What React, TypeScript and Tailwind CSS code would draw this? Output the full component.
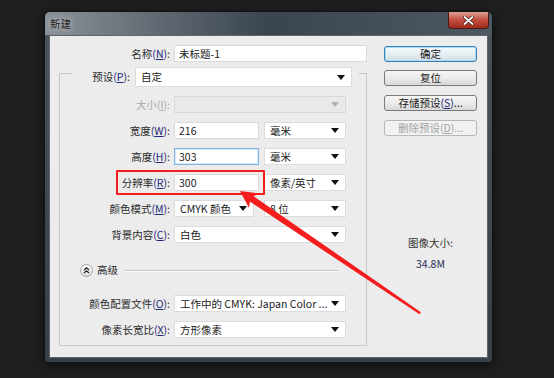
const FONT = "font-['Noto_Sans_CJK_SC',sans-serif]";

function Acc({ k, dim }: { k: string; dim?: boolean }) {
  return (
    <span className={dim ? "text-[#a9a9a9]" : "text-[#1f2a78]"}>
      (<span className="underline underline-offset-[1px]">{k}</span>)
    </span>
  );
}

function Label({ text, k, className, dim }: { text: string; k: string; className: string; dim?: boolean }) {
  return (
    <div className={`shrink-0 text-right whitespace-nowrap ${dim ? "text-[#a9a9a9]" : "text-[#2a2a2a]"} ${className}`}>
      {text}
      <Acc k={k} dim={dim} />:
    </div>
  );
}

function Arrow({ dim }: { dim?: boolean }) {
  return (
    <svg width="8" height="5" viewBox="0 0 8 5" className="shrink-0">
      <polygon points="0,0 8,0 4,5" fill={dim ? "#b0b0b0" : "#111"} />
    </svg>
  );
}

function Select({ value, className, dim, valueClass }: { value?: string; className: string; dim?: boolean; valueClass?: string }) {
  return (
    <div
      className={`flex items-center justify-between border pl-[5px] pr-[6px] ${
        dim ? "bg-[#e9e9e9] border-[#d9d9d9]" : "bg-white border-[#dcdcdc]"
      } ${className}`}
    >
      <span className={`whitespace-nowrap ${valueClass ?? "text-[#1a1a1a]"}`}>{value}</span>
      <Arrow dim={dim} />
    </div>
  );
}

function Field({ value, className, focused }: { value: string; className: string; focused?: boolean }) {
  return (
    <div
      className={`flex items-center bg-white border pl-[4px] text-[#1a1a1a] ${
        focused ? "border-[#7fb3e6] shadow-[inset_0_0_0_1px_#d6e8f9]" : "border-[#dadada]"
      } ${className}`}
    >
      {value}
    </div>
  );
}

function Row({ children, className = "" }: { children: React.ReactNode; className?: string }) {
  return <div className={`flex items-center h-[17px] ${className}`}>{children}</div>;
}

function Btn({ text, k, tail, kind }: { text: string; k?: string; tail?: string; kind?: "default" | "disabled" }) {
  const base = "h-[16px] w-[93px] rounded-[3px] border flex items-center justify-center leading-[14px]";
  const look =
    kind === "default"
      ? "border-[#3a7fb6] bg-gradient-to-b from-[#f4f9fc] via-[#e6eef3] to-[#d3dce2] shadow-[inset_0_0_0_1px_#a8dcf4] text-[#1a1a1a]"
      : kind === "disabled"
      ? "border-[#b4b8bb] bg-[#f2f2f2] text-[#a3a3a3]"
      : "border-[#7a7a7a] bg-gradient-to-b from-[#f6f6f6] via-[#ebebeb] to-[#d8d8d8] text-[#1a1a1a]";
  return (
    <div className={`${base} ${look}`}>
      {text}
      {k && (
        <span className={kind === "disabled" ? "" : "text-[#1f2a78]"}>
          (<span className="underline underline-offset-[1px]">{k}</span>)
        </span>
      )}
      {tail}
    </div>
  );
}

export default function App() {
  return (
    <div className={`relative w-[554px] h-[378px] overflow-hidden bg-[#1f1f1f] pl-[44px] pt-[11px] text-[10.5px] leading-[14px] ${FONT}`}>
      {/* window */}
      <div className="flex flex-col w-[449px] h-[352px] rounded-t-[6px] rounded-b-[4px] border border-[#121518] bg-gradient-to-b from-[#4a535c] to-[#383f46] shadow-[0_2px_8px_rgba(0,0,0,0.6)]">
        {/* title bar */}
        <div className="flex justify-between h-[23px] rounded-t-[5px] bg-gradient-to-r from-[#8b9197] via-[#3a4550] to-[#4d5863]">
          <div className="pl-[5px] pt-[5px] text-[#1c1c1c] [text-shadow:0_0_6px_rgba(255,255,255,0.8)]">新建</div>
          <div className="mr-[3px] w-[41px] h-[17px] rounded-b-[4px] border border-t-0 border-[#4a1a14] bg-gradient-to-b from-[#dca095] via-[#c24c3e] to-[#a12a1c] flex items-center justify-center">
            <svg width="11" height="9" viewBox="0 0 11 9">
              <path d="M1.5 1 L9.5 8 M9.5 1 L1.5 8" stroke="#3a1410" strokeWidth="3.2" strokeLinecap="round" />
              <path d="M1.5 1 L9.5 8 M9.5 1 L1.5 8" stroke="#ffffff" strokeWidth="1.8" strokeLinecap="round" />
            </svg>
          </div>
        </div>

        {/* client area */}
        <div className="mx-[4px] h-[323px] flex border border-[#5f666d] bg-[#ececec] text-[#2a2a2a]">
          {/* left column */}
          <div className="pl-[9px] pt-[9px] w-[317px] shrink-0">
            <Row>
              <Label text="名称" k="N" className="w-[111px]" />
              <Field value="未标题-1" className="ml-[4px] w-[195px] h-[17px]" />
            </Row>

            <div className="mt-[11px] w-[308px] border border-[#c8c8c8] pb-[7px]">
              <div className="mt-[-7px] ml-[12px] w-[287px] h-[20px] bg-[#ececec] flex items-center">
                <Label text="预设" k="P" className="w-[58px]" />
                <Select value="自定" className="ml-[5px] w-[217px] h-[20px]" />
              </div>

              <Row className="mt-[9px]">
                <Label text="大小" k="I" className="w-[110px]" dim />
                <Select className="ml-[4px] w-[172px] h-[17px]" dim />
              </Row>
              <Row className="mt-[9px]">
                <Label text="宽度" k="W" className="w-[110px]" />
                <Field value="216" className="ml-[4px] w-[85px] h-[17px]" />
                <Select value="毫米" className="ml-[5px] w-[82px] h-[17px]" />
              </Row>
              <Row className="mt-[9px]">
                <Label text="高度" k="H" className="w-[110px]" />
                <Field value="303" className="ml-[4px] w-[85px] h-[17px]" focused />
                <Select value="毫米" className="ml-[5px] w-[82px] h-[17px]" />
              </Row>
              <Row className="mt-[9px]">
                <Label text="分辨率" k="R" className="w-[110px]" />
                <Field value="300" className="ml-[4px] w-[85px] h-[17px]" />
                <Select value="像素/英寸" className="ml-[5px] w-[82px] h-[17px]" />
              </Row>
              <Row className="mt-[9px]">
                <Label text="颜色模式" k="M" className="w-[110px]" />
                <Select value="CMYK 颜色" className="ml-[4px] w-[80px] h-[17px]" />
                <Select value="8 位" className="ml-[10px] w-[82px] h-[17px]" />
              </Row>
              <Row className="mt-[9px]">
                <Label text="背景内容" k="C" className="w-[110px]" />
                <Select value="白色" className="ml-[4px] w-[172px] h-[17px]" />
              </Row>

              <div className="mt-[20px] h-[14px] flex items-center pl-[20px] pr-[28px]">
                <svg width="13" height="13" viewBox="0 0 13 13" className="shrink-0">
                  <defs>
                    <linearGradient id="adv" x1="0" y1="0" x2="0" y2="1">
                      <stop offset="0" stopColor="#ffffff" />
                      <stop offset="1" stopColor="#dcdcdc" />
                    </linearGradient>
                  </defs>
                  <circle cx="6.5" cy="6.5" r="6" fill="url(#adv)" stroke="#a5a5a5" />
                  <path d="M4 6 L6.5 3.8 L9 6 M4 9 L6.5 6.8 L9 9" fill="none" stroke="#222" strokeWidth="1.2" />
                </svg>
                <span className="ml-[4px] text-[#2a2a2a]">高级</span>
                <div className="ml-[7px] flex-1 h-px bg-[#c4c4c4] shadow-[0_1px_0_#fafafa]" />
              </div>

              <Row className="mt-[18px]">
                <Label text="颜色配置文件" k="O" className="w-[110px]" />
                <Select value="工作中的 CMYK: Japan Color ..." valueClass="text-[#1a1a1a]" className="ml-[4px] w-[172px] h-[17px]" />
              </Row>
              <Row className="mt-[9px]">
                <Label text="像素长宽比" k="X" className="w-[110px]" />
                <Select value="方形像素" className="ml-[4px] w-[172px] h-[17px]" />
              </Row>
            </div>
          </div>

          {/* right column */}
          <div className="ml-[17px] pt-[10px] flex flex-col items-center w-[93px]">
            <Btn text="确定" kind="default" />
            <div className="mt-[8px]">
              <Btn text="复位" />
            </div>
            <div className="mt-[9px]">
              <Btn text="存储预设" k="S" tail="..." />
            </div>
            <div className="mt-[9px]">
              <Btn text="删除预设" k="D" tail="..." kind="disabled" />
            </div>
            <div className="mt-[100px] text-[#333]">图像大小:</div>
            <div className="mt-[7px] text-[#2b2b52]">34.8M</div>
          </div>
        </div>
      </div>

      {/* annotation: red box + arrow */}
      <div className="absolute left-[116px] top-[170px] w-[149px] h-[25px] border-2 border-[#f41c1c] rounded-[1px]" />
      <svg className="absolute left-0 top-0 pointer-events-none" width="554" height="378" viewBox="0 0 554 378">
        <polygon
          points="240,191 259.4,193.4 253.6,196.2 420.9,312.2 419.5,314.2 249.9,201.6 249,208"
          fill="#f41c1c"
        />
      </svg>
    </div>
  );
}
